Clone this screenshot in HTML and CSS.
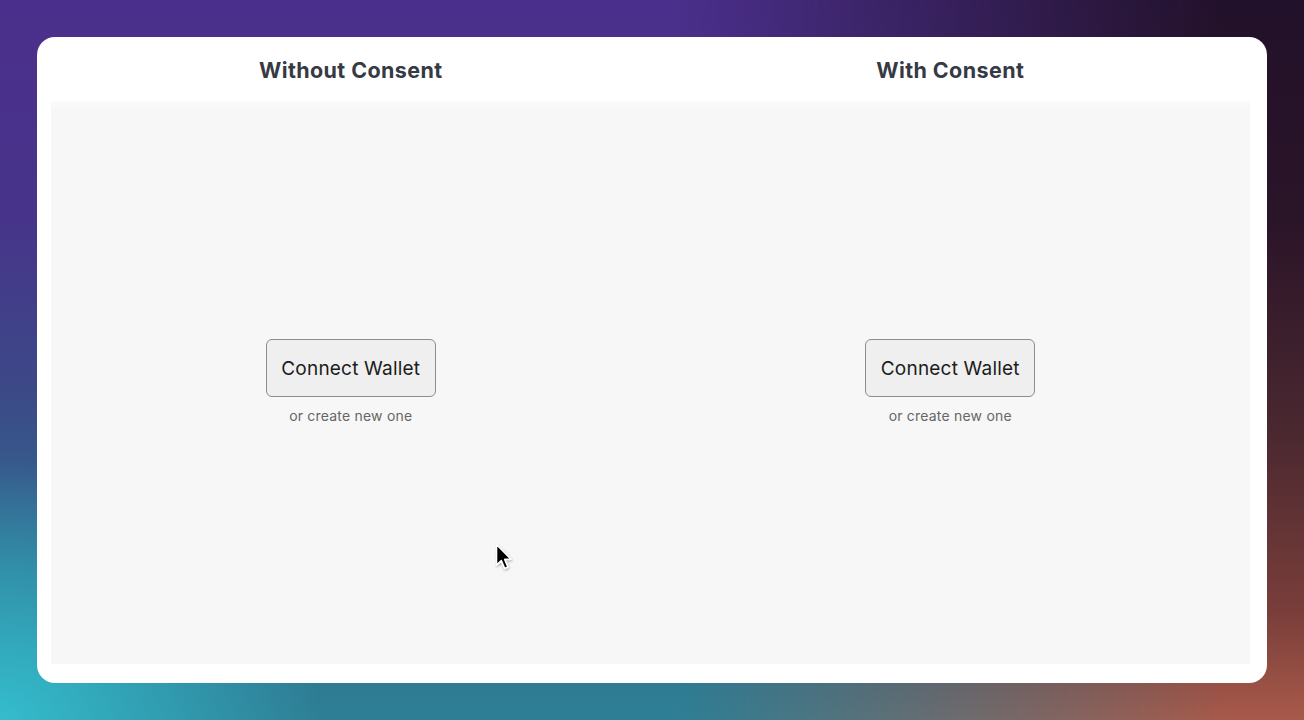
FILE: index.html
```html
<!DOCTYPE html>
<html lang="en">
<head>
<meta charset="utf-8">
<title>Consent demo</title>
<link rel="stylesheet" href="styles.css">
</head>
<body>
<div class="card">
  <div class="heads">
    <h2 class="head">Without Consent</h2>
    <h2 class="head">With Consent</h2>
  </div>
  <div class="panes">
    <div class="pane">
      <button class="connect">Connect Wallet</button>
      <span class="sub">or create new one</span>
      <svg class="cursor" width="20" height="30" viewBox="0 0 20 30" aria-hidden="true">
        <defs>
          <filter id="sh" x="-50%" y="-50%" width="200%" height="200%">
            <feDropShadow dx="0.5" dy="1.2" stdDeviation="1" flood-color="#000" flood-opacity="0.35"/>
          </filter>
        </defs>
        <path filter="url(#sh)" d="M1.5 1.5 L1.5 22 L6.3 17.6 L9.6 25.4 L12.9 24 L9.7 16.4 L16 16.2 Z" fill="#000" stroke="#fff" stroke-width="1.6" stroke-linejoin="round"/>
      </svg>
    </div>
    <div class="pane">
      <button class="connect">Connect Wallet</button>
      <span class="sub">or create new one</span>
    </div>
  </div>
</div>
</body>
</html>
```

FILE: styles.css
```css
* { box-sizing: border-box; }
html, body { margin: 0; height: 100%; }
body {
  width: 1304px;
  height: 720px;
  overflow: hidden;
  position: relative;
  font-family: Inter, "Noto Sans", "Liberation Sans", sans-serif;
  background:
    radial-gradient(ellipse 320px 260px at 0% 100%, rgba(52, 192, 208, 0.95) 0%, rgba(52, 192, 208, 0) 100%),
    linear-gradient(180deg, #4b2f8c 0%, #47348a 30%, #3c4a88 55%, #2f7090 80%, #2e7f95 100%);
  padding: 37px;
  z-index: 0;
}
body::before {
  content: "";
  position: absolute;
  inset: 0;
  z-index: -1;
  background: linear-gradient(180deg, #22112a 0%, #2a1428 30%, #4a2830 60%, #7a3e3a 85%, #a85a4a 100%);
  -webkit-mask-image: linear-gradient(90deg, transparent 52%, #000 94%);
  mask-image: linear-gradient(90deg, transparent 52%, #000 94%);
}
.card {
  width: 1230px;
  height: 646px;
  background: #ffffff;
  border-radius: 18px;
  display: flex;
  flex-direction: column;
  padding: 0 17px 19px 14px;
}
.heads {
  display: grid;
  grid-template-columns: 1fr 1fr;
  height: 64px;
  align-items: center;
}
.head {
  margin: 0;
  text-align: center;
  font-size: 21.5px;
  font-weight: 700;
  color: #363a45;
  letter-spacing: 0.4px;
  padding-top: 2px;
}
.panes {
  flex: 1;
  display: grid;
  grid-template-columns: 1fr 1fr;
  background: linear-gradient(180deg, #fbfbfb 0, #f7f7f7 8px, #f7f7f7 100%);
}
.pane {
  position: relative;
  display: flex;
  flex-direction: column;
  align-items: center;
  justify-content: center;
  padding-bottom: 2px;
}
.connect {
  height: 58px;
  padding: 0 14.5px;
  font-family: Inter, "Noto Sans", "Liberation Sans", sans-serif;
  font-size: 19px;
  letter-spacing: 0.2px;
  color: #1c1c20;
  background: #efefef;
  border: 1px solid #8d8d8d;
  border-radius: 6px;
}
.sub {
  margin-top: 10px;
  font-size: 14px;
  letter-spacing: 0.2px;
  color: #666666;
}
.cursor {
  position: absolute;
  left: 444px;
  top: 442px;
}
```
